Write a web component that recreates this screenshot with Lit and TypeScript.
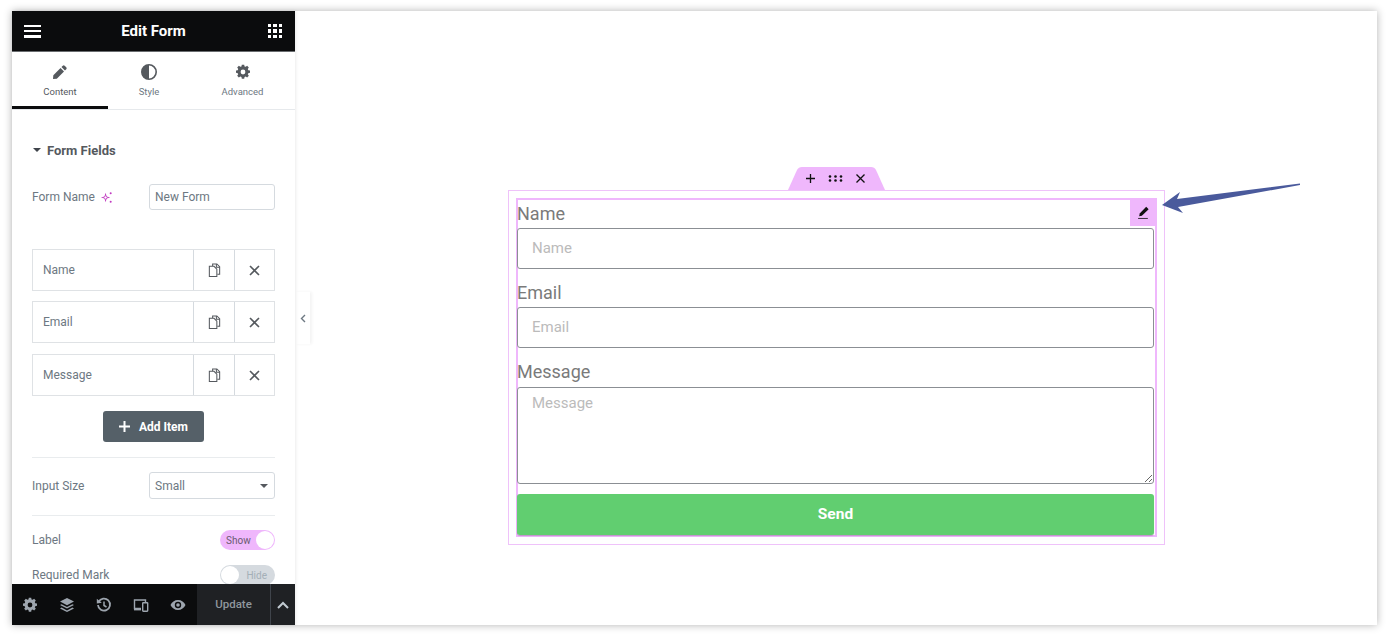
import { LitElement, html, css, svg } from "lit";
import { customElement } from "lit/decorators.js";

const gear = svg`<path d="M10.2 1h3.6l.5 2.6 1.7.7 2.2-1.5 2.5 2.5-1.5 2.2.7 1.7 2.6.5v3.6l-2.6.5-.7 1.7 1.5 2.2-2.5 2.5-2.2-1.5-1.7.7-.5 2.6h-3.6l-.5-2.6-1.7-.7-2.2 1.5-2.5-2.5 1.5-2.2-.7-1.7-2.6-.5v-3.6l2.6-.5.7-1.7-1.5-2.2 2.5-2.5 2.2 1.5 1.7-.7zM12 8.4a3.6 3.6 0 1 0 0 7.2 3.6 3.6 0 0 0 0-7.2z" fill-rule="evenodd"/>`;
const pencil = svg`<path d="M16.2 2.6a2 2 0 0 1 2.8 0l2.4 2.4a2 2 0 0 1 0 2.8l-2 2-5.2-5.2zM12.8 6 18 11.2 7.2 22 1.5 22.5 2 16.8z"/>`;
const copyIcon = svg`<g fill="none" stroke="currentColor" stroke-width="1.1"><path d="M5.500 3.500v-2.500h4.500l3 3v8h-2.500"/><path d="M2 3.500h5l3 3v8h-8z" fill="#fff"/><path d="M9.500 1v3.500h3.500"/></g>`;

@customElement("app-root")
export class AppRoot extends LitElement {
  static styles = css`
    :host { display: block; position: relative; height: 638px; background: #fff; font-family: Roboto, "Liberation Sans", sans-serif; overflow: hidden; }
    * { box-sizing: border-box; }
    .window { position: absolute; left: 12px; top: 11px; width: 1365px; height: 614px; display: flex; background: #fff; box-shadow: 0 0 8px rgba(0,0,0,.3); }
    .side { width: 283px; flex: none; display: flex; flex-direction: column; background: #fff; box-shadow: 1px 0 3px rgba(0,0,0,.08); z-index: 1; }
    .head { height: 41px; flex: none; background: #0b0c0d; border-bottom: 1px solid #6a6d70; display: flex; align-items: center; justify-content: space-between; padding: 0 13px 0 12px; color: #fff; }
    .head b { font-size: 15px; font-weight: 700; margin-right: 2px; }
    .burger { width: 17px; height: 13px; display: flex; flex-direction: column; justify-content: space-between; }
    .burger i { display: block; height: 2.5px; background: #fff; }
    .waffle { width: 14px; height: 14px; display: grid; grid-template-columns: repeat(3, 1fr); gap: 2px; }
    .waffle i { background: #fff; }
    .tabs { height: 58px; flex: none; display: flex; border-bottom: 1px solid #e6e9ec; }
    .tab { display: flex; flex-direction: column; align-items: center; padding-top: 12px; gap: 6px; font-size: 9.5px; color: #6d7882; height: 57px; }
    .tab svg { width: 16px; height: 16px; fill: #55595e; }
    .tab.t1 { width: 96px; border-bottom: 3px solid #0b0c0d; color: #55595e; }
    .tab.t2 { width: 82px; }
    .tab.t3 { width: 105px; }
    .body { flex: 1; min-height: 0; overflow: hidden; padding: 30px 20px 0; color: #6d7882; font-size: 12px; }
    .sec { height: 20px; display: flex; align-items: center; gap: 6px; font-size: 13px; font-weight: 700; color: #55595e; padding-left: 1px; }
    .caret { width: 0; height: 0; border: 4px solid transparent; border-top: 4px solid #3f444b; border-bottom: 0; }
    .ctl { display: flex; align-items: center; justify-content: space-between; }
    .ctl.name { margin-top: 24px; }
    .lab { display: flex; align-items: center; gap: 5px; }
    .lab svg { width: 13px; height: 13px; fill: #c03ac0; }
    .inp { width: 126px; height: 26px; border: 1px solid #d5dadf; border-radius: 3px; padding: 0 5px; font: 12px Roboto, sans-serif; color: #6d7882; background: #fff; display: flex; align-items: center; justify-content: space-between; outline: none; }
    .rows { margin-top: 39px; display: flex; flex-direction: column; gap: 10px; }
    .row { height: 42px; border: 1px solid #dfe2e5; display: flex; align-items: center; }
    .row:last-child { margin-top: 1px; }
    .row span { flex: 1; padding-left: 10px; }
    .row div { width: 41px; height: 100%; border-left: 1px solid #d5dadf; display: flex; align-items: center; justify-content: center; }
    .row div:last-child { width: 40px; }
    .row svg { width: 15px; height: 15px; color: #55595e; }
    .x { stroke: #55595e; stroke-width: 1.6; fill: none; }
    .add { display: flex; align-items: center; justify-content: center; gap: 9px; width: 101px; height: 31px; margin: 15px auto 0; background: #556068; border-radius: 3px; color: #fff; font-size: 12px; font-weight: 700; }
    .add svg { width: 11px; height: 11px; stroke: #fff; stroke-width: 2; }
    hr { border: 0; border-top: 1px solid #e9ecee; margin: 0; }
    .h1 { margin-top: 15px; }
    .ctl.size { margin-top: 14px; }
    .ctl.size .inp { height: 27px; }
    .h2 { margin-top: 16px; }
    .ctl.l1 { margin-top: 14px; height: 20px; }
    .ctl.l2 { margin-top: 15px; height: 20px; }
    .arrowd { width: 0; height: 0; border: 4px solid transparent; border-top: 4px solid #55595e; border-bottom: 0; margin-right: 1px; }
    .sw { width: 55px; height: 20px; border-radius: 10px; position: relative; font-size: 10px; display: flex; align-items: center; }
    .sw.on { background: #efb7fc; color: #6a5a70; padding-left: 6px; }
    .sw.off { background: #d5dadf; color: #a4afb7; justify-content: flex-end; padding-right: 8px; }
    .sw i { position: absolute; top: 1px; width: 18px; height: 18px; background: #fff; border-radius: 50%; }
    .sw.on i { right: 1px; }
    .sw.off i { left: 1px; }
    .foot { height: 41px; flex: none; background: #0b0c0d; display: flex; align-items: stretch; position: relative; }
    .ficons { width: 185px; display: flex; align-items: center; padding-left: 10px; gap: 21px; }
    .ficons svg { width: 16px; height: 16px; fill: #9da5ae; flex: none; color: #9da5ae; }
    .upd { width: 73px; background: #1f2124; color: #8f979e; font-size: 11.5px; font-weight: 500; display: flex; align-items: center; justify-content: center; padding-bottom: 1px; }
    .chev { flex: 1; background: #1f2124; border-left: 1px solid #3f444b; display: flex; align-items: center; justify-content: center; }
    .chev svg { width: 12px; height: 8px; stroke: #c2cbd2; stroke-width: 2; fill: none; }
    .canvas { flex: 1; position: relative; padding: 179px 0 0 213px; }
    .collapse { position: absolute; left: 0; top: 281px; width: 15px; height: 52px; background: #fff; box-shadow: 2px 0 3px rgba(0,0,0,.05); display: flex; align-items: center; justify-content: center; }
    .collapse svg { width: 6px; height: 9px; stroke: #6d7882; stroke-width: 1.4; fill: none; }
    .outer { position: relative; width: 657px; height: 355px; border: 1px solid #efc2fa; padding: 7px; }
    .tool { position: absolute; left: 279px; top: -24px; width: 97px; height: 23px; display: flex; align-items: center; justify-content: center; gap: 12px; padding: 0 2px 1px 0; }
    .tool .shape { position: absolute; inset: 0; width: 97px; height: 23px; fill: #efb7fc; }
    .tool svg.ic { position: relative; width: 11px; height: 11px; stroke: #111; stroke-width: 1.3; fill: none; }
    .tool svg.dots { width: 15px; }
    .tool svg.dots circle { fill: #111; stroke: none; }
    .inner { position: relative; width: 641px; height: 339px; border: 2px solid #efb7fc; }
    .edit { position: absolute; right: -2px; top: -2px; width: 27px; height: 28px; background: #efb7fc; display: flex; align-items: center; justify-content: center; }
    .edit svg { width: 13px; height: 13px; }
    label { display: block; height: 28px; line-height: 28px; font-size: 18px; color: #7a7a7a; margin-left: -1px; }
    label.tall { height: 29px; }
    .f { display: block; width: 637px; height: 41px; border: 1px solid #8b8f94; border-radius: 3px; padding: 0 14px 2px; font: 15px Roboto, sans-serif; color: #7a7a7a; background: #fff; margin: 0 0 10px -1px; outline: none; position: relative; }
    .f::placeholder { color: #bbb; opacity: 1; }
    textarea.f { height: 97px; padding: 6px 14px; resize: vertical; }
    .send { display: flex; align-items: center; justify-content: center; width: 637px; height: 41px; margin-left: -1px; position: relative; padding-bottom: 1px; background: #61ce70; color: #fff; font-size: 15.5px; font-weight: 700; border-radius: 3px; box-shadow: 0 1px 1px rgba(0,0,0,.2); }
    .arrow { position: absolute; left: 1160px; top: 180px; width: 142px; height: 36px; fill: #4a5a9c; }
  `;

  private row(name: string) {
    return html`<div class="row"><span>${name}</span>
      <div><svg viewBox="0 0 15 16">${copyIcon}</svg></div>
      <div><svg viewBox="0 0 15 15"><path class="x" d="M3 3l9 9M12 3l-9 9"/></svg></div></div>`;
  }

  render() {
    return html`
      <div class="window">
        <aside class="side">
          <div class="head">
            <div class="burger"><i></i><i></i><i></i></div>
            <b>Edit Form</b>
            <div class="waffle"><i></i><i></i><i></i><i></i><i></i><i></i><i></i><i></i><i></i></div>
          </div>
          <div class="tabs">
            <div class="tab t1"><svg viewBox="0 0 24 24">${pencil}</svg>Content</div>
            <div class="tab t2"><svg viewBox="0 0 16 16"><path fill-rule="evenodd" d="M8 0a8 8 0 1 0 0 16A8 8 0 0 0 8 0zm0 1.6v12.8A6.4 6.4 0 0 0 8 1.6z"/></svg>Style</div>
            <div class="tab t3"><svg viewBox="0 0 24 24">${gear}</svg>Advanced</div>
          </div>
          <div class="body">
            <div class="sec"><span class="caret"></span>Form Fields</div>
            <div class="ctl name">
              <span class="lab">Form Name <svg viewBox="0 0 14 14"><path d="M6 2l1.2 3.8L11 7 7.2 8.2 6 12 4.8 8.2 1 7l3.8-1.2zM6 4.6 5.5 6.5 3.6 7l1.9.5.5 1.9.5-1.9 1.9-.5-1.9-.5z" fill-rule="evenodd"/><circle cx="11.5" cy="2.5" r="1.1"/><circle cx="11.5" cy="11.5" r="1.1"/></svg></span>
              <input class="inp" .value=${"New Form"} />
            </div>
            <div class="rows">${this.row("Name")}${this.row("Email")}${this.row("Message")}</div>
            <div class="add"><svg viewBox="0 0 11 11"><path d="M5.5 0v11M0 5.5h11"/></svg>Add Item</div>
            <hr class="h1" />
            <div class="ctl size"><span>Input Size</span><div class="inp">Small<span class="arrowd"></span></div></div>
            <hr class="h2" />
            <div class="ctl l1"><span>Label</span><div class="sw on">Show<i></i></div></div>
            <div class="ctl l2"><span>Required Mark</span><div class="sw off"><i></i>Hide</div></div>
          </div>
          <div class="foot">
            <div class="ficons">
              <svg viewBox="0 0 24 24">${gear}</svg>
              <svg viewBox="0 0 16 16"><path d="M8 1l7 3.6-7 3.6-7-3.6z"/><path d="M2.6 7.2 8 10l5.400-2.800L15 8l-7 3.600L1 8z"/><path d="M2.600 10.600 8 13.400l5.400-2.800L15 11.400 8 15l-7-3.600z"/></svg>
              <svg viewBox="0 0 16 16"><path fill="none" stroke="currentColor" stroke-width="1.8" d="M2.600 5A6 6 0 1 1 2 8"/><path d="M0.800 1.800 5.800 5.800 0.800 6.400z"/><path fill="none" stroke="currentColor" stroke-width="1.500" d="M8 4.500V8.500L10.500 10"/></svg>
              <svg viewBox="0 0 16 16"><path fill="none" stroke="currentColor" stroke-width="1.400" d="M8 11.500H1.500V3h11v2"/><rect x="9.700" y="5.700" width="5" height="8.500" rx=".6" fill="none" stroke="currentColor" stroke-width="1.400"/><path d="M1 12h7v1.400H1z"/></svg>
              <svg viewBox="0 0 16 16"><path fill-rule="evenodd" d="M8 3C4.600 3 1.800 5.100.5 8c1.300 2.900 4.100 5 7.500 5s6.200-2.100 7.500-5C14.200 5.100 11.400 3 8 3zm0 1.800a3.200 3.200 0 1 1 0 6.400 3.200 3.200 0 0 1 0-6.400z"/><circle cx="8" cy="8" r="1.800"/></svg>
            </div>
            <div class="upd">Update</div>
            <div class="chev"><svg viewBox="0 0 12 8"><path d="M1 7l5-5 5 5"/></svg></div>
          </div>
        </aside>
        <main class="canvas">
          <div class="collapse"><svg viewBox="0 0 6 9"><path d="M5 1 1.500 4.500 5 8"/></svg></div>
          <div class="outer">
            <div class="tool">
              <svg class="shape" viewBox="0 0 97 23"><path d="M0 23 9 3Q10.500 0 14 0H83Q86.500 0 88 3L97 23z"/></svg>
              <svg class="ic" viewBox="0 0 11 11"><path d="M5.500 1v9M1 5.500h9"/></svg>
              <svg class="ic dots" viewBox="0 0 15 11"><circle cx="2" cy="3.500" r="1.300"/><circle cx="7.500" cy="3.500" r="1.300"/><circle cx="13" cy="3.500" r="1.300"/><circle cx="2" cy="7.500" r="1.300"/><circle cx="7.500" cy="7.500" r="1.300"/><circle cx="13" cy="7.500" r="1.300"/></svg>
              <svg class="ic" viewBox="0 0 11 11"><path d="M1.500 1.500l8 8M9.500 1.500l-8 8"/></svg>
            </div>
            <div class="inner">
              <label>Name</label><input class="f" placeholder="Name" />
              <label>Email</label><input class="f" placeholder="Email" />
              <label class="tall">Message</label><textarea class="f" placeholder="Message"></textarea>
              <div class="send">Send</div>
              <div class="edit"><svg viewBox="0 0 24 24"><path d="M17 1.500 21.500 6 9 18 4 19 5 14z" fill="#111"/><path d="M2 23h18" stroke="#111" stroke-width="1.500"/></svg></div>
            </div>
          </div>
        </main>
      </div>
      <svg class="arrow" viewBox="1160 180 142 36"><path d="M1162 205 1180 192 1177 199 1300 183.500 1300 185 1178 207 1183 213z"/></svg>
    `;
  }
}
